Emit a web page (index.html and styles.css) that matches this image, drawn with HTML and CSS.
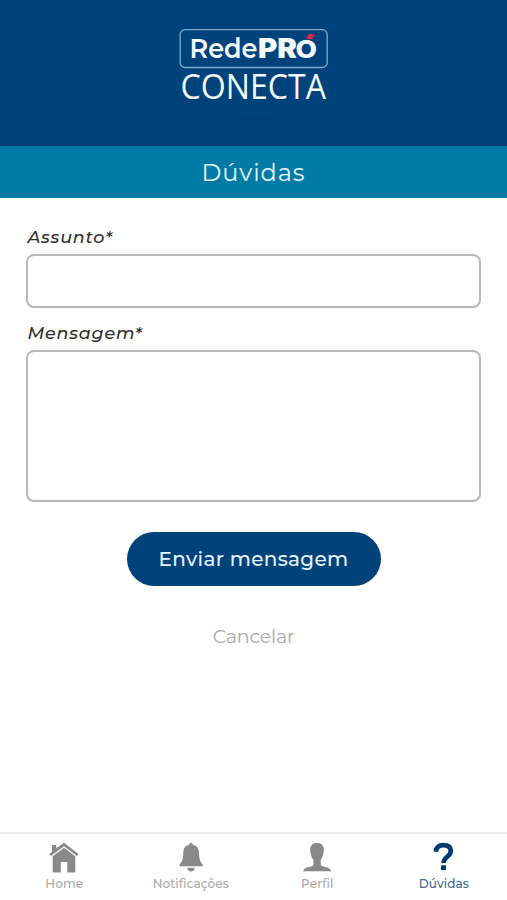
FILE: index.html
```html
<!DOCTYPE html>
<html lang="pt-BR">
<head>
<meta charset="utf-8">
<title>Dúvidas</title>
<link rel="stylesheet" href="styles.css">
</head>
<body>
<div class="app">
  <header class="header">
    <svg class="logo" width="150" height="100" viewBox="178.500 27 150 100">
      <rect class="logo-frame" x="179.700" y="29.700" width="147" height="37.800" rx="5"/>
      <text class="logo-rede" x="189" y="58.300" textLength="68" lengthAdjust="spacingAndGlyphs">Rede</text>
      <text class="logo-pro" x="257.500" y="58.300" textLength="39" lengthAdjust="spacingAndGlyphs">PR</text>
      <text class="logo-o" x="295" y="58.200" textLength="21.500" lengthAdjust="spacingAndGlyphs">O</text>
      <path class="logo-accent" d="M308.300 34h6l-2.500 5h-6.300z"/>
      <text class="logo-conecta" x="180" y="99.300" textLength="145.500" lengthAdjust="spacingAndGlyphs">CONECTA</text>
      <ellipse class="logo-shade" cx="253" cy="119" rx="40" ry="2"/>
    </svg>
  </header>
  <h1 class="title">Dúvidas</h1>
  <form class="form">
    <label class="label label-subject" for="assunto">Assunto*</label>
    <input class="field subject" id="assunto" type="text">
    <label class="label label-message" for="mensagem">Mensagem*</label>
    <textarea class="field message" id="mensagem"></textarea>
    <button class="submit" type="button">Enviar mensagem</button>
    <a class="cancel">Cancelar</a>
  </form>
  <nav class="nav">
    <a class="tab">
      <svg width="32" height="32" viewBox="0 0 32 32"><path d="M4 3h4.200v3.300L16 .8l14.500 11.200-1.500 2L16 4.200 3 14l-1.700-2L4 9.800z"/><path d="M16 5.700l11.300 8.600V30.500H19.300V20h-6.500v10.500H4.700V14.300z"/></svg>
      <span>Home</span>
    </a>
    <a class="tab">
      <svg width="32" height="32" viewBox="0 0 32 32"><path d="M16 .8c1.200 0 1.700.8 1.800 2 4.200.8 6 3.500 6.200 8 .3 6.500.8 8.500 3.600 11.500v2H4.700v-2c2.800-3 3.300-5 3.600-11.500.2-4.500 1.800-7.200 5.900-8 .1-1.200.6-2 1.800-2z"/><path d="M12.300 25.700h7.400c-.5 2.700-1.700 3.800-3.700 3.800s-3.200-1.100-3.700-3.800z"/></svg>
      <span>Notificações</span>
    </a>
    <a class="tab">
      <svg width="32" height="32" viewBox="0 0 32 32"><path d="M16 1c4.800 0 7 2.700 6.800 7-.2 4.500-1.300 7.500-3.100 9.700v4c0 2 1.500 2.700 4.500 3.300 3.700.7 5.500 1.700 6.200 4.300H2c.7-2.600 2.500-3.600 6.200-4.300 3-.6 4.300-1.300 4.300-3.300v-4C10.500 15.500 9.400 12.500 9.200 8 9 3.700 11.200 1 16 1z"/></svg>
      <span>Perfil</span>
    </a>
    <a class="tab active">
      <svg width="32" height="32" viewBox="0 0 32 32"><path class="question" d="M7.800 9.700C8.400 5.300 11 3.200 15.300 3.200c4.700 0 7.500 2.100 7.500 5.900 0 5.500-7.200 5.400-7.200 12"/><path d="M13 23.300h5v4.800h-5z"/></svg>
      <span>Dúvidas</span>
    </a>
  </nav>
</div>
</body>
</html>
```
FILE: styles.css
```css
* { box-sizing: border-box; }
body {
  margin: 0;
  background: #fefefe;
  font-family: Montserrat, Inter, sans-serif;
}
.app { height: 900px; display: flex; flex-direction: column; overflow: hidden; }
.header { height: 145.500px; padding-top: 27px; background: #00427a; flex: none; }
.logo { display: block; margin: 0 auto; overflow: visible; }
.logo text { fill: #f4faff; }
.logo-frame { fill: none; stroke: #7fa9cd; stroke-width: 1.300; }
.logo-rede { font: 600 27px Montserrat, Lato, sans-serif; }
.logo-pro { font: 900 27px Inter, Lato, sans-serif; }
.logo-o { font: 800 24px Inter, Lato, sans-serif; }
.logo-conecta { font: 500 34px "Open Sans", sans-serif; }
.logo .logo-accent { fill: #dd2949; }
.logo .logo-shade { fill: #003b70; opacity: .5; }
.title {
  margin: 0;
  height: 52.500px;
  flex: none;
  background: #007ba6;
  color: #e8f8ff;
  font-size: 24px;
  font-weight: 400;
  line-height: 54px;
  letter-spacing: .9px;
  text-align: center;
}
.form { flex: 1; padding: 27px 26px 0; display: flex; flex-direction: column; }
.label { height: 24px; line-height: 24px; font-size: 17.500px; font-style: italic; font-weight: 500; letter-spacing: .8px; color: #303030; padding-left: 1.500px; }
.field { display: block; width: 455px; border: 2.500px solid #b8b8b8; border-radius: 8px; background: #fefefe; outline: none; resize: none; margin: 0; padding: 12px; font: inherit; }
.subject { height: 54px; margin-top: 4.500px; }
.label-message { margin-top: 13.500px; }
.message { height: 152px; margin-top: 5px; }
.submit { width: 254px; height: 54px; margin: 30px auto 0; border: 0; border-radius: 27px; padding: 0; background: #00427a; color: #e8f5ff; font: 500 20px Montserrat, Inter, sans-serif; letter-spacing: .3px; }
.cancel { margin: 38px auto 0; height: 26px; line-height: 26px; font-size: 19px; letter-spacing: -.2px; color: #aaa; }
.nav { height: 68px; flex: none; border-top: 2px solid #eaeaea; display: grid; grid-template-columns: repeat(4, 126.500px); padding-left: 1px; }
.tab { padding-top: 8px; display: flex; flex-direction: column; align-items: center; color: #aaa; font-size: 12px; font-weight: 500; }
.tab svg { display: block; fill: #898989; }
.tab span { margin-top: 2px; line-height: 16px; letter-spacing: .1px; }
.tab.active { color: #42698d; }
.tab.active svg { fill: #003b70; }
.tab .question { fill: none; stroke: #003b70; stroke-width: 4.700; }
```
